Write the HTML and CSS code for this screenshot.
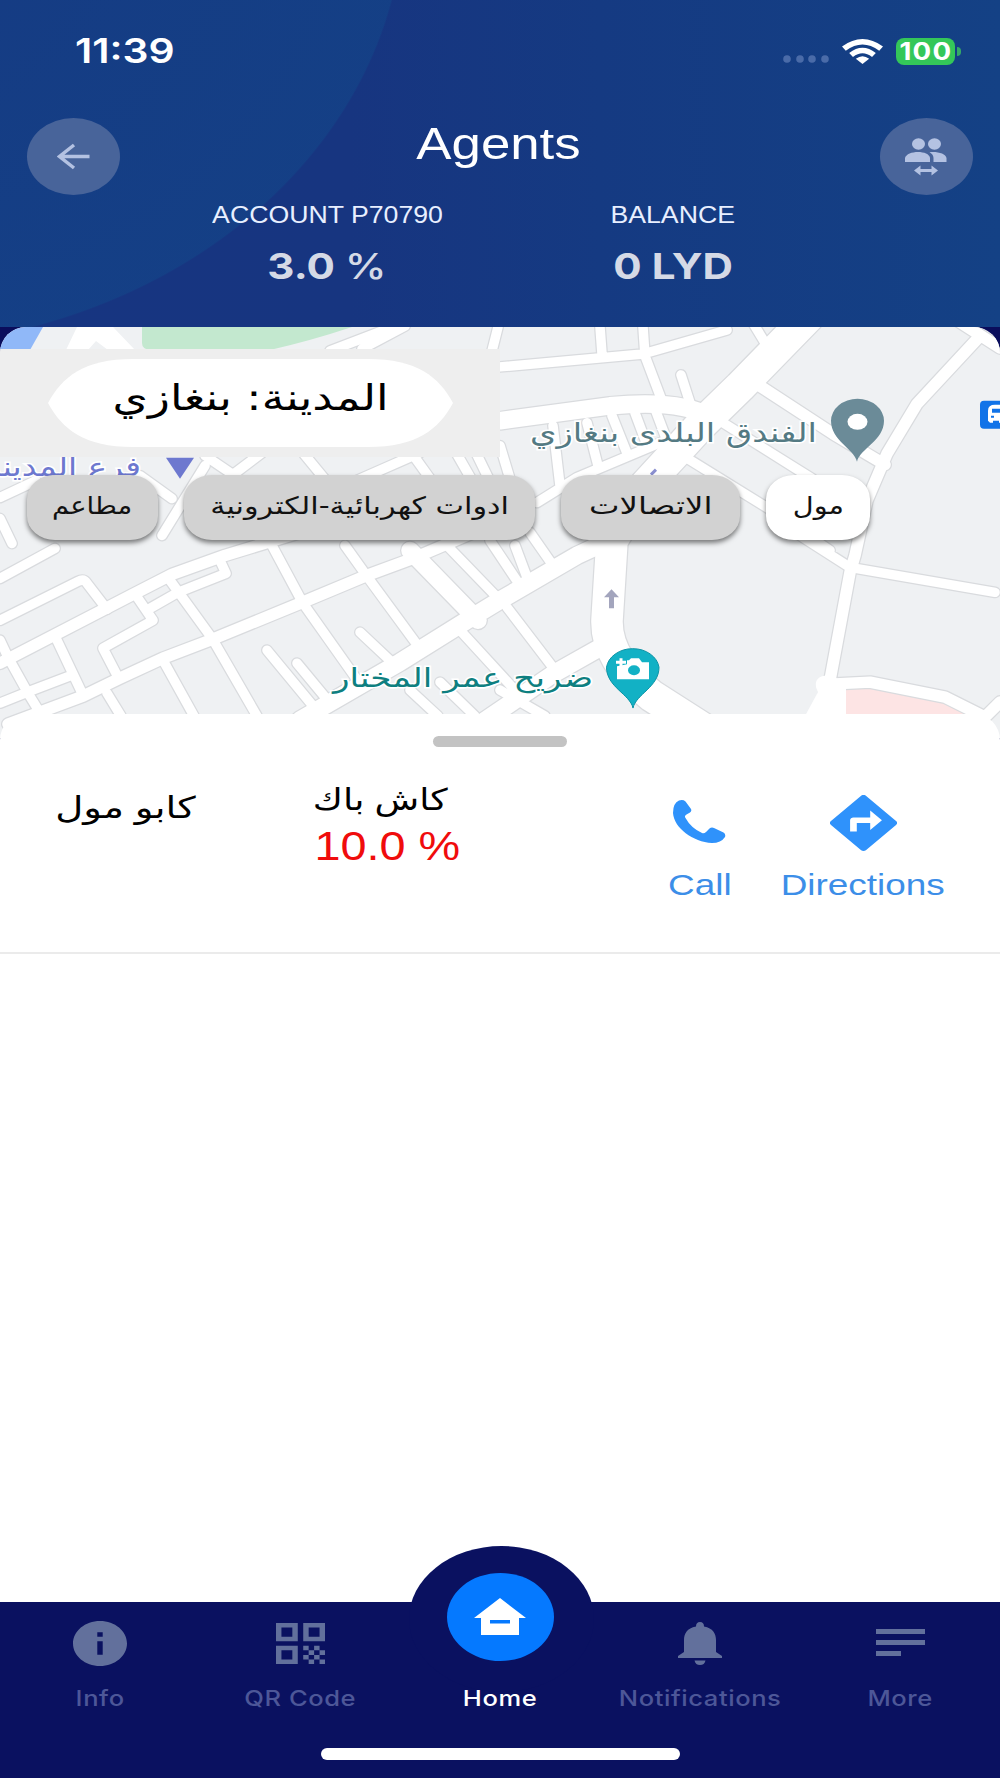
FILE: index.html
```html
<!DOCTYPE html>
<html lang="en">
    <head>
        <meta charset="utf-8" />
        <meta name="viewport" content="width=device-width, initial-scale=1" />
        <title>Agents</title>
        <link rel="stylesheet" href="styles.css">
    </head>
    <body>
        <header class="header">
            <div class="status">
                <span class="time">11:39</span>
                <svg class="signal" viewBox="0 0 46 8"><circle cx="4" cy="4" r="3.8" /><circle cx="17" cy="4" r="3.8" /><circle cx="29" cy="4" r="3.8" /><circle cx="42" cy="4" r="3.8" /></svg>
                <svg class="wifi" viewBox="0 0 40 25" preserveAspectRatio="none">
                    <path d="M0 7.5Q20 -7.5 40 7.5L36.3 11.7Q20 -0.5 3.7 11.7Z" />
                    <path d="M7 14Q20 3.5 33 14L29.3 18Q20 10.5 10.7 18Z" />
                    <path d="M13.500 19.800Q20 14.500 26.500 19.800L20 25Z" />
                </svg>
                <span class="battery"><b>100</b></span>
                <i class="battery-tip"></i>
            </div>
            <div class="title-bar">
                <a class="round" href="#">
                    <svg width="34" height="27" viewBox="0 0 34 27"><path class="line" d="M32.500 13.500H3M17 2L2.500 13.500L17 25" /></svg>
                </a>
                <h1>Agents</h1>
                <a class="round" href="#">
                    <svg width="42" height="38" viewBox="0 0 42 38">
                        <ellipse cx="13.500" cy="6" rx="6.500" ry="5.700" />
                        <ellipse cx="29.500" cy="6" rx="6.500" ry="5.700" />
                        <path d="M0 24V20C1 16 7 14 13 14S24.500 16 25 20V24Z" />
                        <path d="M24.500 14.200C32 13.200 41 15.500 41.500 20V24H28.500V20Q28.500 16.500 24.500 14.200Z" />
                        <path d="M9 32.500L15.500 27.500V31H26.500V27.500L33 32.500L26.500 37.500V34H15.500V37.500Z" />
                    </svg>
                </a>
            </div>
            <div class="accounts">
                <div class="account">
                    <span class="caption">ACCOUNT P70790</span>
                    <span class="amount">3.0 <span class="percent">%</span></span>
                </div>
                <div class="account">
                    <span class="caption">BALANCE</span>
                    <span class="amount">0 LYD</span>
                </div>
            </div>
        </header>

        <section class="map">
            <svg class="map-tiles" viewBox="0 326 1000 412" preserveAspectRatio="none">
                <defs>
                    <g id="small">
                        <path d="M0 578L55 548M0 620L78 581Q84 578 87 583L107 609M0 640L8 657L28 693L42 716M0 703L30 691L72 675M57 640L83 695M118 677L103 648L153 620L138 598M150 608L178 592L226 573L220 560M170 580L212 638L257 716M163 660L194 716M107 693L121 716" />
                        <path d="M272 545L303 603L356 678M345 545L370 580L419 647M360 632L395 665M267 650L318 712M297 663L330 703M447 545L500 600M515 545L527 577M490 540L520 585M530 532L553 565M507 607L555 670M410 690L438 716M440 682L475 716M460 630L515 690M500 690L545 716" />
                        <path d="M500 366L643 353L727 329M600 326L602 353M643 326L645 355L662 400M681 374L690 402M753 322L770 350M553 425L560 485M587 422L598 465M612 415L628 455M635 412L648 447M655 408L667 440M537 502L577 477L665 440M500 445L512 485M723 422L812 478L850 510M683 455L767 507L830 550M800 535L850 567L995 592" />
                        <path d="M0 497L36 480M0 518L12 543M140 475L172 498M162 535L205 465M205 455L233 474L262 452M303 452L330 485M345 485L420 452M410 450L435 485M455 450L475 485M475 450L492 485M330 350L395 325M362 348L405 325M498 326L492 350" />
                    </g>
                    <g id="medium">
                        <path d="M0 663L133 594L172 574L225 555L300 532M8 724L83 696L120 678L163 658L210 640L300 603L367 575L413 558L490 525M758 384L833 433L885 464M980 335L917 403L887 453L867 500L855 555L850 572L830 680L815 720M955 318L1000 347M830 684L870 682L945 697L985 717L1000 702" />
                    </g>
                    <g id="large">
                        <path d="M300 720L400 662L467 620L500 600L577 555L620 535M410 550L478 620M500 420L610 405Q680 398 713 417M480 724L553 674L606 644" />
                    </g>
                    <g id="avenue">
                        <path d="M808 316L740 386L700 425L645 485L612 540L607 620Q606 660 652 696L702 728" />
                    </g>
                </defs>
                <rect class="ground" y="326" width="1000" height="412" />
                <path class="water" d="M0 326H43L30 349H0Z" />
                <path class="park" d="M142 326H352Q310 340 270 349H150Q142 348 142 342Z" />
                <path class="hospital" d="M845 686H867L943 700L970 718H845Z" />
                <g class="casing">
                    <use href="#small" class="small" /><use href="#medium" class="medium" />
                    <use href="#large" class="large" /><use href="#avenue" class="avenue" />
                </g>
                <g class="road">
                    <use href="#small" class="small" /><use href="#medium" class="medium" />
                    <use href="#large" class="large" /><use href="#avenue" class="avenue" />
                </g>
                <path class="plaza" d="M77 326H113L135 349H108L96 340L88 349H66Z" />
                <path class="plaza" d="M805 716L818 692Q812 680 822 676L832 674L846 688V716Z" />
                <path class="oneway" d="M609 608V597H604L611.500 589L619 597H614V608Z" />
                <path class="oneway-small" d="M651 474L656 469" />

                <text class="place branch" x="141" y="475" textLength="156" lengthAdjust="spacingAndGlyphs">فرع المدينة</text>
                <path class="branch" d="M166 457H194L180 478Z" />
                <text class="place hotel" x="817" y="441" textLength="287" lengthAdjust="spacingAndGlyphs">الفندق البلدى بنغازي</text>
                <path class="hotel-pin" d="M857 461C854 448 831 440 831 420A26.500 22 0 0 1 884 420C884 440 860 448 857 461Z" />
                <ellipse class="pin-hole" cx="857.500" cy="421" rx="10" ry="8" />
                <text class="place shrine" x="593" y="687" textLength="260" lengthAdjust="spacingAndGlyphs">ضريح عمر المختار</text>
                <path class="shrine-pin" d="M633 708C630 694 606.500 687 606.500 667A26.500 21.500 0 0 1 659 667C659 687 636 694 633 708Z" />
                <path class="camera" d="M617 666L627 664V660H629L631 658H639L642 662H649V679H617Z" />
                <path class="camera-plus" d="M621 658V666M616 662H626" />
                <ellipse class="lens" cx="634" cy="670" rx="6" ry="5" />
                <rect class="bus" x="980" y="400" width="30" height="28" rx="4" />
                <path class="bus-icon" d="M988 420V410Q988 404 995 404H1002V422H999V420H993V422H990ZM992 408V412H1002V408ZM991 415V417H994V415Z" />
            </svg>
            <div class="city"><button class="city-button"><span>المدينة: بنغازي</span></button></div>
            <div class="chips">
                <button class="chip restaurants"><span>مطاعم</span></button>
                <button class="chip electronics"><span>ادوات كهربائية-الكترونية</span></button>
                <button class="chip telecom"><span>الاتصالات</span></button>
                <button class="chip mall active"><span>مول</span></button>
            </div>
        </section>

        <main class="sheet">
            <div class="handle"></div>
            <div class="agent">
                <div class="name"><span>كابو مول</span></div>
                <div class="cashback">
                    <span class="cashback-label">كاش باك</span>
                    <span class="cashback-value">10.0 %</span>
                </div>
                <a class="action call" href="#">
                    <svg viewBox="0 0 53 43" width="53" height="43"><path d="M6 .5Q10 -.8 12.500 1.500L18 9Q19 11 17 12.500L13.500 14.500Q11 16 12.500 18Q18 28 29 33Q31 34 33 32L36.500 28.500Q38.500 27 41 28L50.500 32.500Q53 34 52 37Q48 43 39 43C20 42 1 28 0 13Q0 3 6 .5Z" /></svg>
                    <span>Call</span>
                </a>
                <a class="action directions" href="#">
                    <svg viewBox="2 2 20 20" width="67" height="56" preserveAspectRatio="none"><path d="M21.710 11.290l-9-9a.996.996 0 0 0-1.410 0l-9 9a.996.996 0 0 0 0 1.410l9 9c.39.39 1.020.39 1.410 0l9-9a.996.996 0 0 0 0-1.410zM14 14.500V12h-4v3H8v-4c0-.55.45-1 1-1h5V7.500l3.500 3.500-3.500 3.500z" /></svg>
                    <span>Directions</span>
                </a>
            </div>
        </main>

        <nav class="tabs">
            <a href="#">
                <svg viewBox="2 2 20 20" width="54" height="45" preserveAspectRatio="none"><path d="M12 2C6.480 2 2 6.480 2 12s4.480 10 10 10 10-4.480 10-10S17.520 2 12 2zm1 15h-2v-6h2v6zm0-8h-2V7h2v2z" /></svg>
                <span>Info</span>
            </a>
            <a href="#">
                <svg viewBox="0 0 18 18" width="49" height="41" preserveAspectRatio="none" fill-rule="evenodd"><path d="M0 0H8V8H0ZM2 2V6H6V2ZM10 0H18V8H10ZM12 2V6H16V2ZM0 10H8V18H0ZM2 12V16H6V12ZM10 10H12V12H10ZM14 10H16V12H14ZM12 12H14V14H12ZM16 12H18V14H16ZM10 14H12V16H10ZM14 14H16V16H14ZM12 16H14V18H12ZM16 16H18V18H16Z" /></svg>
                <span>QR Code</span>
            </a>
            <a class="home" href="#">
                <i class="home-button">
                    <svg viewBox="0 0 52 38" width="52" height="38"><path fill-rule="evenodd" d="M26 0L52 20H45V37H7V20H0ZM16 22V25.500H36V22Z" /></svg>
                </i>
                <span>Home</span>
            </a>
            <a href="#">
                <svg viewBox="0 0 44 43" width="44" height="43"><path d="M22 0Q26 0 26 4.500C35 6 38 12 38 18V30L44 34V36H0V34L6 30V18C6 12 9 6 18 4.500Q18 0 22 0ZM16.500 38.500H27.500Q26.500 43 22 43T16.500 38.500Z" /></svg>
                <span>Notifications</span>
            </a>
            <a href="#">
                <svg viewBox="0 0 49 28" width="49" height="28"><path d="M0 0H49V5H0ZM0 11H49V16H0ZM0 22H25V27H0Z" /></svg>
                <span>More</span>
            </a>
            <div class="home-indicator"></div>
        </nav>
    </body>
</html>
```

FILE: styles.css
```css
* {
    box-sizing: border-box;
}
body {
    display: flex;
    flex-direction: column;
    width: 1000px;
    height: 1778px;
    margin: 0;
    overflow: hidden;
    background-color: #0a0d5c;
    font-family: "Liberation Sans", "DejaVu Sans", Arial, sans-serif;
}
a {
    text-decoration: none;
}
button {
    border: 0;
    padding: 0;
    font-family: "DejaVu Sans", sans-serif;
}
svg {
    display: block;
}
span {
    white-space: nowrap;
}

/* header */
.header {
    height: 327px;
    background:
        radial-gradient(532px 443px at -127px -95px, rgba(20, 62, 132, 0.6) 0, rgba(20, 66, 135, 0.8) 99.7%, transparent 100%),
        linear-gradient(90deg, #173581 0, #173580 35%, #153a82 60%, #144185 100%);
}
.status {
    display: flex;
    align-items: center;
    height: 102px;
    padding: 0 39px 0 75px;
}
.time {
    margin-right: auto;
    color: #fff;
    font: 600 34px/40px Inter, sans-serif;
    transform: scaleX(1.2);
    transform-origin: left;
}
.signal {
    width: 46px;
    height: 8px;
    margin: 16px 13px 0 0;
    fill: #4a6ba8;
}
.wifi {
    width: 41px;
    height: 25px;
    margin-right: 13px;
    fill: #fff;
}
.battery {
    display: flex;
    align-items: center;
    justify-content: center;
    width: 59px;
    height: 27px;
    border-radius: 8px;
    background-color: #34c759;
    color: #fff;
    font: 24px/27px Inter, sans-serif;
}
.battery b {
    letter-spacing: 1px;
    transform: scaleX(1.15);
}
.battery-tip {
    width: 4px;
    height: 9px;
    margin-left: 2px;
    border-radius: 0 4px 4px 0;
    background-color: #34a967;
}
.title-bar {
    display: flex;
    justify-content: space-between;
    height: 97px;
    padding: 16px 27px 0;
}
.title-bar h1 {
    margin: 1px 0 0 -4px;
    color: #fff;
    font-size: 44px;
    font-weight: normal;
    line-height: 50px;
    transform: scaleX(1.2);
}
.round {
    display: flex;
    align-items: center;
    justify-content: center;
    width: 93px;
    height: 77px;
    border-radius: 50%;
    background-color: #48649a;
    fill: #b4c2e2;
}
.round .line {
    fill: none;
    stroke: #b4c2e2;
    stroke-width: 3.500;
}
.accounts {
    display: grid;
    grid-template-columns: 346px 346px;
    justify-content: center;
}
.account {
    display: flex;
    flex-direction: column;
    align-items: center;
    color: #e8efff;
}
.caption {
    font-size: 23px;
    line-height: 32px;
    transform: scaleX(1.16);
}
.amount {
    margin-top: 13px;
    color: #d5dae6;
    font: bold 36px/44px Inter, sans-serif;
    transform: scaleX(1.17);
}
.percent {
    font-weight: 500;
}

/* map */
.map {
    position: relative;
    height: 411px;
    padding-top: 22px;
    border-radius: 26px 26px 0 0;
    overflow: hidden;
}
.map-tiles {
    position: absolute;
    inset: 0;
    width: 1000px;
    height: 411px;
}
.ground {
    fill: #eff1f3;
}
.water {
    fill: #90b8f8;
}
.park {
    fill: #c3e8cf;
}
.hospital {
    fill: #fde4e4;
}
.casing,
.road {
    fill: none;
    stroke-linecap: round;
    stroke-linejoin: round;
}
.casing {
    stroke: #d9dbde;
}
.road {
    stroke: #fff;
}
.casing .small {
    stroke-width: 12px;
}
.casing .medium {
    stroke-width: 14px;
}
.casing .large {
    stroke-width: 20px;
}
.casing .avenue {
    stroke-width: 34px;
}
.road .small {
    stroke-width: 9.500px;
}
.road .medium {
    stroke-width: 11.500px;
}
.road .large {
    stroke-width: 17.500px;
}
.road .avenue {
    stroke-width: 31.500px;
}
.plaza {
    fill: #fff;
}
.oneway {
    fill: #a3a5bd;
}
.oneway-small {
    stroke: #8a8fd0;
    stroke-width: 3;
}
.place {
    direction: rtl;
    font-family: "DejaVu Sans", sans-serif;
    font-size: 27px;
    paint-order: stroke;
    stroke: #fff;
    stroke-width: 3px;
}
.branch {
    fill: #6d78cf;
}
.hotel {
    fill: #547a83;
}
.hotel-pin {
    fill: #6b8b98;
}
.pin-hole {
    fill: #fff;
}
.shrine {
    fill: #0e7f80;
}
.shrine-pin {
    fill: #12b1c5;
    stroke: #0b93a5;
}
.camera {
    fill: #fff;
}
.camera-plus {
    stroke: #fff;
    stroke-width: 3;
}
.lens {
    fill: #12b1c5;
}
.bus {
    fill: #1173e8;
}
.bus-icon {
    fill: #fff;
    fill-rule: evenodd;
}
.city {
    position: relative;
    width: 500px;
    height: 108px;
    padding: 10px 0 0 48px;
    background-color: #eee;
}
.city-button {
    width: 405px;
    height: 88px;
    padding-bottom: 12px;
    background-color: #fff;
    clip-path: path("M0 44C14 18 36 0 85 0H320C369 0 391 18 405 44C391 70 369 88 320 88H85C36 88 14 70 0 44Z");
    color: #000;
    font-size: 36px;
}
.city-button span {
    display: inline-block;
    transform: scaleX(1.26);
}
.chips {
    position: relative;
    display: flex;
    gap: 26px;
    padding: 18px 27px 0;
}
.chip {
    display: flex;
    align-items: center;
    justify-content: center;
    height: 65px;
    padding-bottom: 4px;
    border-radius: 28px / 24px;
    background-color: #d2d2d2;
    box-shadow: 0 3px 5px rgba(0, 0, 0, 0.5);
    color: #111;
    font-size: 24px;
}
.chip.active {
    background-color: #fff;
}
.restaurants {
    width: 131px;
}
.restaurants span {
    transform: scaleX(1.14);
}
.electronics {
    width: 351px;
}
.electronics span {
    transform: scaleX(1.26);
}
.telecom {
    width: 179px;
}
.telecom span {
    transform: scaleX(1.35);
}
.mall {
    width: 104px;
}
.mall span {
    transform: scaleX(1.2);
}

/* bottom sheet */
.sheet {
    position: relative;
    flex: 1;
    margin-top: -24px;
    padding-top: 22px;
    border-radius: 26px 26px 0 0;
    background-color: #fff;
}
.handle {
    width: 134px;
    height: 11px;
    margin: 0 auto;
    border-radius: 6px;
    background-color: #c3c3c3;
}
.agent {
    display: grid;
    grid-template-columns: 250px 260px 1fr 123px 204px 35px;
    height: 207px;
    border-bottom: 2px solid #ebebeb;
    font-family: "Liberation Sans", "DejaVu Sans", sans-serif;
}
.name {
    padding-top: 39px;
    text-align: center;
    font-size: 30px;
    line-height: 44px;
}
.name span {
    display: inline-block;
    transform: scaleX(1.29);
}
.cashback {
    display: flex;
    flex-direction: column;
    align-items: center;
    padding-top: 33px;
}
.cashback-label {
    font-size: 30px;
    line-height: 40px;
    transform: scaleX(1.22);
}
.cashback-value {
    margin: 2px 0 0 14px;
    color: #f00c0c;
    font-size: 40px;
    line-height: 48px;
    transform: scaleX(1.17);
}
.action {
    grid-column: 4;
    display: flex;
    flex-direction: column;
    align-items: center;
    color: #3c8ee8;
    fill: #2f92fb;
}
.action span {
    font-size: 30px;
    line-height: 36px;
    transform: scaleX(1.23);
}
.call {
    padding-top: 53px;
}
.call span {
    margin-top: 24px;
}
.directions {
    grid-column: 5;
    padding-top: 48px;
}
.directions span {
    margin-top: 16px;
}

/* tab bar */
.tabs {
    position: relative;
    display: grid;
    grid-template-columns: repeat(5, 200px);
    height: 176px;
    background-color: #0a1160;
}
.tabs::before {
    content: "";
    position: absolute;
    top: -56px;
    left: 409px;
    width: 185px;
    height: 146px;
    border-radius: 50%;
    background-color: #0a1160;
}
.tabs a {
    position: relative;
    display: grid;
    grid-template-rows: 82px 28px;
    place-items: center;
    align-content: start;
    color: #4d5798;
    fill: #62709c;
}
.tabs span {
    font: 500 22px/28px Inter, sans-serif;
    letter-spacing: 0.5px;
    transform: scaleX(1.16);
}
.tabs .home {
    color: #fff;
    fill: #fff;
}
.home-button {
    display: flex;
    align-items: center;
    justify-content: center;
    width: 107px;
    height: 88px;
    margin-top: -52px;
    border-radius: 50%;
    background-color: #0579ff;
}
.home-indicator {
    position: absolute;
    left: 321px;
    bottom: 18px;
    width: 359px;
    height: 12px;
    border-radius: 6px;
    background-color: #fff;
}
```
